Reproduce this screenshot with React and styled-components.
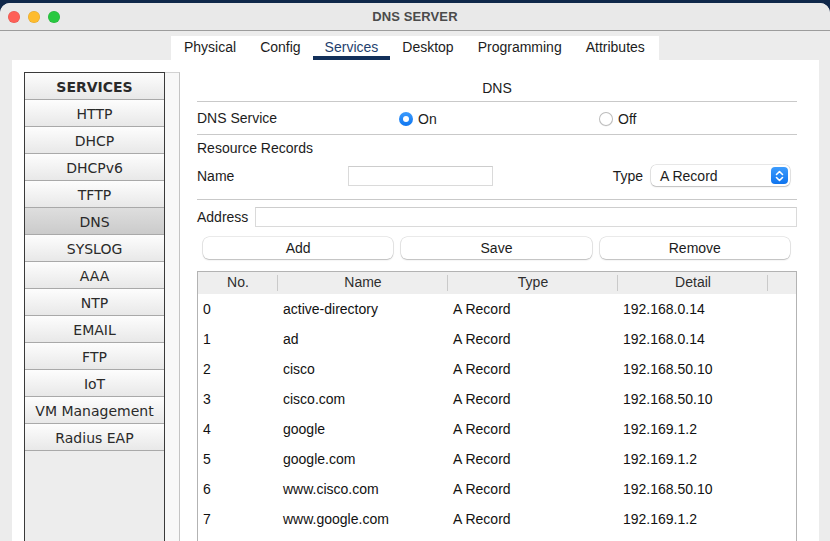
import styled, { createGlobalStyle } from "styled-components";

const GlobalStyle = createGlobalStyle`
  html, body {
    margin: 0;
    padding: 0;
    height: 100%;
    overflow: hidden;
    background: #10284a;
  }
  #root {
    height: 100%;
  }
  * {
    box-sizing: border-box;
  }
`;

const Window = styled.div`
  margin-top: 3px;
  height: calc(100% - 3px);
  display: flex;
  flex-direction: column;
  background: #ececec;
  border-radius: 10px 10px 0 0;
  overflow: hidden;
  font-family: "Liberation Sans", Arial, sans-serif;
  font-size: 14px;
  color: #1c1c1c;
`;

const TitleBar = styled.div`
  height: 28px;
  flex-shrink: 0;
  display: grid;
  grid-template-columns: 1fr auto 1fr;
  align-items: center;
  background: #e9e9e9;
  border-bottom: 1px solid #9c9c9c;
`;

const Lights = styled.div`
  display: flex;
  gap: 8px;
  padding-left: 8px;
`;

const Light = styled.span`
  width: 12px;
  height: 12px;
  border-radius: 50%;
  background: ${(p) => p.$color};
  box-shadow: inset 0 0 0 0.5px rgba(0, 0, 0, 0.12);
`;

const Title = styled.div`
  font-weight: 700;
  font-size: 13px;
  color: #4b4b4b;
  letter-spacing: 0.1px;
`;

const Tabs = styled.div`
  margin: 5px 0 0 171px;
  width: 488px;
  height: 24px;
  flex-shrink: 0;
  display: flex;
  padding-left: 1px;
  background: #fff;
`;

const Tab = styled.div`
  padding: 0 12px;
  line-height: 23px;
  color: ${(p) => (p.$active ? "#1f3f6e" : "#1c1c1c")};
  box-shadow: ${(p) => (p.$active ? "inset 0 -4px 0 #12305a" : "none")};
`;

const Panel = styled.div`
  flex: 1;
  min-height: 0;
  margin: 0 11px 0 12px;
  background: #fff;
  display: flex;
  padding: 12px 22px 0 12px;
`;

const Sidebar = styled.div`
  width: 156px;
  margin-right: 17px;
  display: flex;
  flex-shrink: 0;
`;

const ServiceList = styled.div`
  width: 141px;
  border: 1px solid #3a3a3a;
  border-bottom: none;
  background: #ededed;
  font-family: "DejaVu Sans", Verdana, sans-serif;
  font-size: 14px;
  color: #2a2a2a;
`;

const ServiceItem = styled.div`
  height: 27px;
  padding-top: 1px;
  border-bottom: 1px solid #a9a9a9;
  display: flex;
  align-items: center;
  justify-content: center;
  font-weight: ${(p) => (p.$header ? 700 : 400)};
  background: ${(p) =>
    p.$active
      ? "linear-gradient(#dedede, #cbcbcb)"
      : "linear-gradient(#fdfdfd, #e8e8e8)"};
`;

const Track = styled.div`
  width: 15px;
  background: #f8f8f8;
  border-top: 1px solid #d2d2d2;
  border-right: 1px solid #c4c4c4;
`;

const Main = styled.div`
  flex: 1;
  display: flex;
  flex-direction: column;
  min-width: 0;
`;

const Heading = styled.div`
  height: 30px;
  padding-top: 8px;
  line-height: 16px;
  text-align: center;
  border-bottom: 1px solid #c9c9c9;
`;

const ServiceRow = styled.div`
  height: 33px;
  display: grid;
  grid-template-columns: 200px 200px 200px;
  align-items: center;
  border-bottom: 1px solid #c9c9c9;
`;

const RadioLabel = styled.label`
  display: flex;
  align-items: center;
  gap: 5px;
  padding-left: 2px;
  padding-top: 1px;
`;

const Radio = styled.span`
  width: 14px;
  height: 14px;
  border-radius: 50%;
  display: flex;
  align-items: center;
  justify-content: center;
  background: ${(p) =>
    p.$checked ? "linear-gradient(#3c9bfd, #0f76f0)" : "#fff"};
  box-shadow: ${(p) =>
    p.$checked ? "none" : "inset 0 0 0 1px #bcbcbc, 0 0.5px 0.5px rgba(0,0,0,0.08)"};

  &::after {
    content: "";
    width: 6px;
    height: 6px;
    border-radius: 50%;
    background: #fff;
    display: ${(p) => (p.$checked ? "block" : "none")};
  }
`;

const RecordSection = styled.div`
  padding: 5px 0 13px;
  border-bottom: 1px solid #c9c9c9;
`;

const SectionLabel = styled.div`
  line-height: 16px;
`;

const FieldRow = styled.div`
  margin-top: 9px;
  height: 21px;
  display: flex;
  align-items: center;
`;

const FieldLabel = styled.div`
  width: ${(p) => p.$width || "auto"};
  flex-shrink: 0;
`;

const TextInput = styled.div`
  width: ${(p) => p.$width || "auto"};
  flex: ${(p) => (p.$grow ? 1 : "none")};
  height: 20px;
  background: #fff;
  border: 1px solid #dadada;
  border-top-color: #cdcdcd;
`;

const Spacer = styled.div`
  flex: 1;
`;

const Select = styled.div`
  width: 139px;
  height: 21px;
  margin: 0 7px 0 8px;
  border-radius: 5px;
  background: #fff;
  box-shadow: 0 0 0 0.5px rgba(0, 0, 0, 0.18), 0 1px 1.5px rgba(0, 0, 0, 0.18);
  display: flex;
  align-items: center;
  justify-content: space-between;
  padding: 0 2px 0 9px;
`;

const Stepper = styled.span`
  width: 17px;
  height: 17px;
  border-radius: 4px;
  background: linear-gradient(#3d9cfd, #0f74ee);
  display: flex;
  align-items: center;
  justify-content: center;
`;

const AddressRow = styled.div`
  margin-top: 7px;
  height: 20px;
  display: flex;
  align-items: center;
  gap: 7px;
`;

const ButtonRow = styled.div`
  margin-top: 10px;
  display: grid;
  grid-template-columns: repeat(3, 1fr);
  gap: 8px;
  padding: 0 7px 0 6px;
`;

const Button = styled.button`
  height: 22px;
  padding: 0;
  border: none;
  border-radius: 6px;
  background: #fff;
  font-family: inherit;
  font-size: 14px;
  color: #1c1c1c;
  box-shadow: 0 0 0 0.5px rgba(0, 0, 0, 0.16), 0 1px 1.5px rgba(0, 0, 0, 0.2);
`;

const Table = styled.div`
  margin-top: 12px;
  flex: 1;
  border: 1px solid #b3b3b3;
  border-bottom: none;
`;

const cols = "80px 170px 170px 150px 1fr";

const HeaderRow = styled.div`
  display: grid;
  grid-template-columns: ${cols};
  height: 22px;
  background: #eeeeee;
`;

const HeaderCell = styled.div`
  position: relative;
  text-align: center;
  line-height: 20px;
  color: #2e2e2e;

  &::after {
    content: "";
    position: absolute;
    right: 0;
    top: 3px;
    bottom: 3px;
    width: 1px;
    background: #cacaca;
  }
`;

const BodyRow = styled.div`
  display: grid;
  grid-template-columns: ${cols};
  height: 30px;
  align-items: center;
`;

const Cell = styled.div`
  padding-left: 5px;
  color: #111;
`;

const services = [
  "HTTP",
  "DHCP",
  "DHCPv6",
  "TFTP",
  "DNS",
  "SYSLOG",
  "AAA",
  "NTP",
  "EMAIL",
  "FTP",
  "IoT",
  "VM Management",
  "Radius EAP",
];

const records = [
  ["active-directory", "192.168.0.14"],
  ["ad", "192.168.0.14"],
  ["cisco", "192.168.50.10"],
  ["cisco.com", "192.168.50.10"],
  ["google", "192.169.1.2"],
  ["google.com", "192.169.1.2"],
  ["www.cisco.com", "192.168.50.10"],
  ["www.google.com", "192.169.1.2"],
];

const tabs = ["Physical", "Config", "Services", "Desktop", "Programming", "Attributes"];

function App() {
  return (
    <>
      <GlobalStyle />
      <Window>
        <TitleBar>
          <Lights>
            <Light $color="#fe5f57" />
            <Light $color="#febc2e" />
            <Light $color="#28c840" />
          </Lights>
          <Title>DNS SERVER</Title>
          <div />
        </TitleBar>

        <Tabs>
          {tabs.map((t) => (
            <Tab key={t} $active={t === "Services"}>
              {t}
            </Tab>
          ))}
        </Tabs>

        <Panel>
          <Sidebar>
            <ServiceList>
              <ServiceItem $header>SERVICES</ServiceItem>
              {services.map((s) => (
                <ServiceItem key={s} $active={s === "DNS"}>
                  {s}
                </ServiceItem>
              ))}
            </ServiceList>
            <Track />
          </Sidebar>

          <Main>
            <Heading>DNS</Heading>
            <ServiceRow>
              <div>DNS Service</div>
              <RadioLabel>
                <Radio $checked />
                On
              </RadioLabel>
              <RadioLabel>
                <Radio />
                Off
              </RadioLabel>
            </ServiceRow>

            <RecordSection>
              <SectionLabel>Resource Records</SectionLabel>
              <FieldRow>
                <FieldLabel $width="151px">Name</FieldLabel>
                <TextInput $width="145px" />
                <Spacer />
                <FieldLabel>Type</FieldLabel>
                <Select>
                  A Record
                  <Stepper>
                    <svg width="9" height="12" viewBox="0 0 9 12" fill="none">
                      <path
                        d="M1.5 4.5 L4.5 1.5 L7.5 4.5 M1.5 7.5 L4.5 10.5 L7.5 7.5"
                        stroke="#fff"
                        strokeWidth="1.6"
                        strokeLinecap="round"
                        strokeLinejoin="round"
                      />
                    </svg>
                  </Stepper>
                </Select>
              </FieldRow>
            </RecordSection>

            <AddressRow>
              <FieldLabel>Address</FieldLabel>
              <TextInput $grow />
            </AddressRow>

            <ButtonRow>
              <Button>Add</Button>
              <Button>Save</Button>
              <Button>Remove</Button>
            </ButtonRow>

            <Table>
              <HeaderRow>
                <HeaderCell>No.</HeaderCell>
                <HeaderCell>Name</HeaderCell>
                <HeaderCell>Type</HeaderCell>
                <HeaderCell>Detail</HeaderCell>
                <div />
              </HeaderRow>
              {records.map(([name, detail], i) => (
                <BodyRow key={name}>
                  <Cell>{i}</Cell>
                  <Cell>{name}</Cell>
                  <Cell>A Record</Cell>
                  <Cell>{detail}</Cell>
                  <div />
                </BodyRow>
              ))}
            </Table>
          </Main>
        </Panel>
      </Window>
    </>
  );
}

export default App;
